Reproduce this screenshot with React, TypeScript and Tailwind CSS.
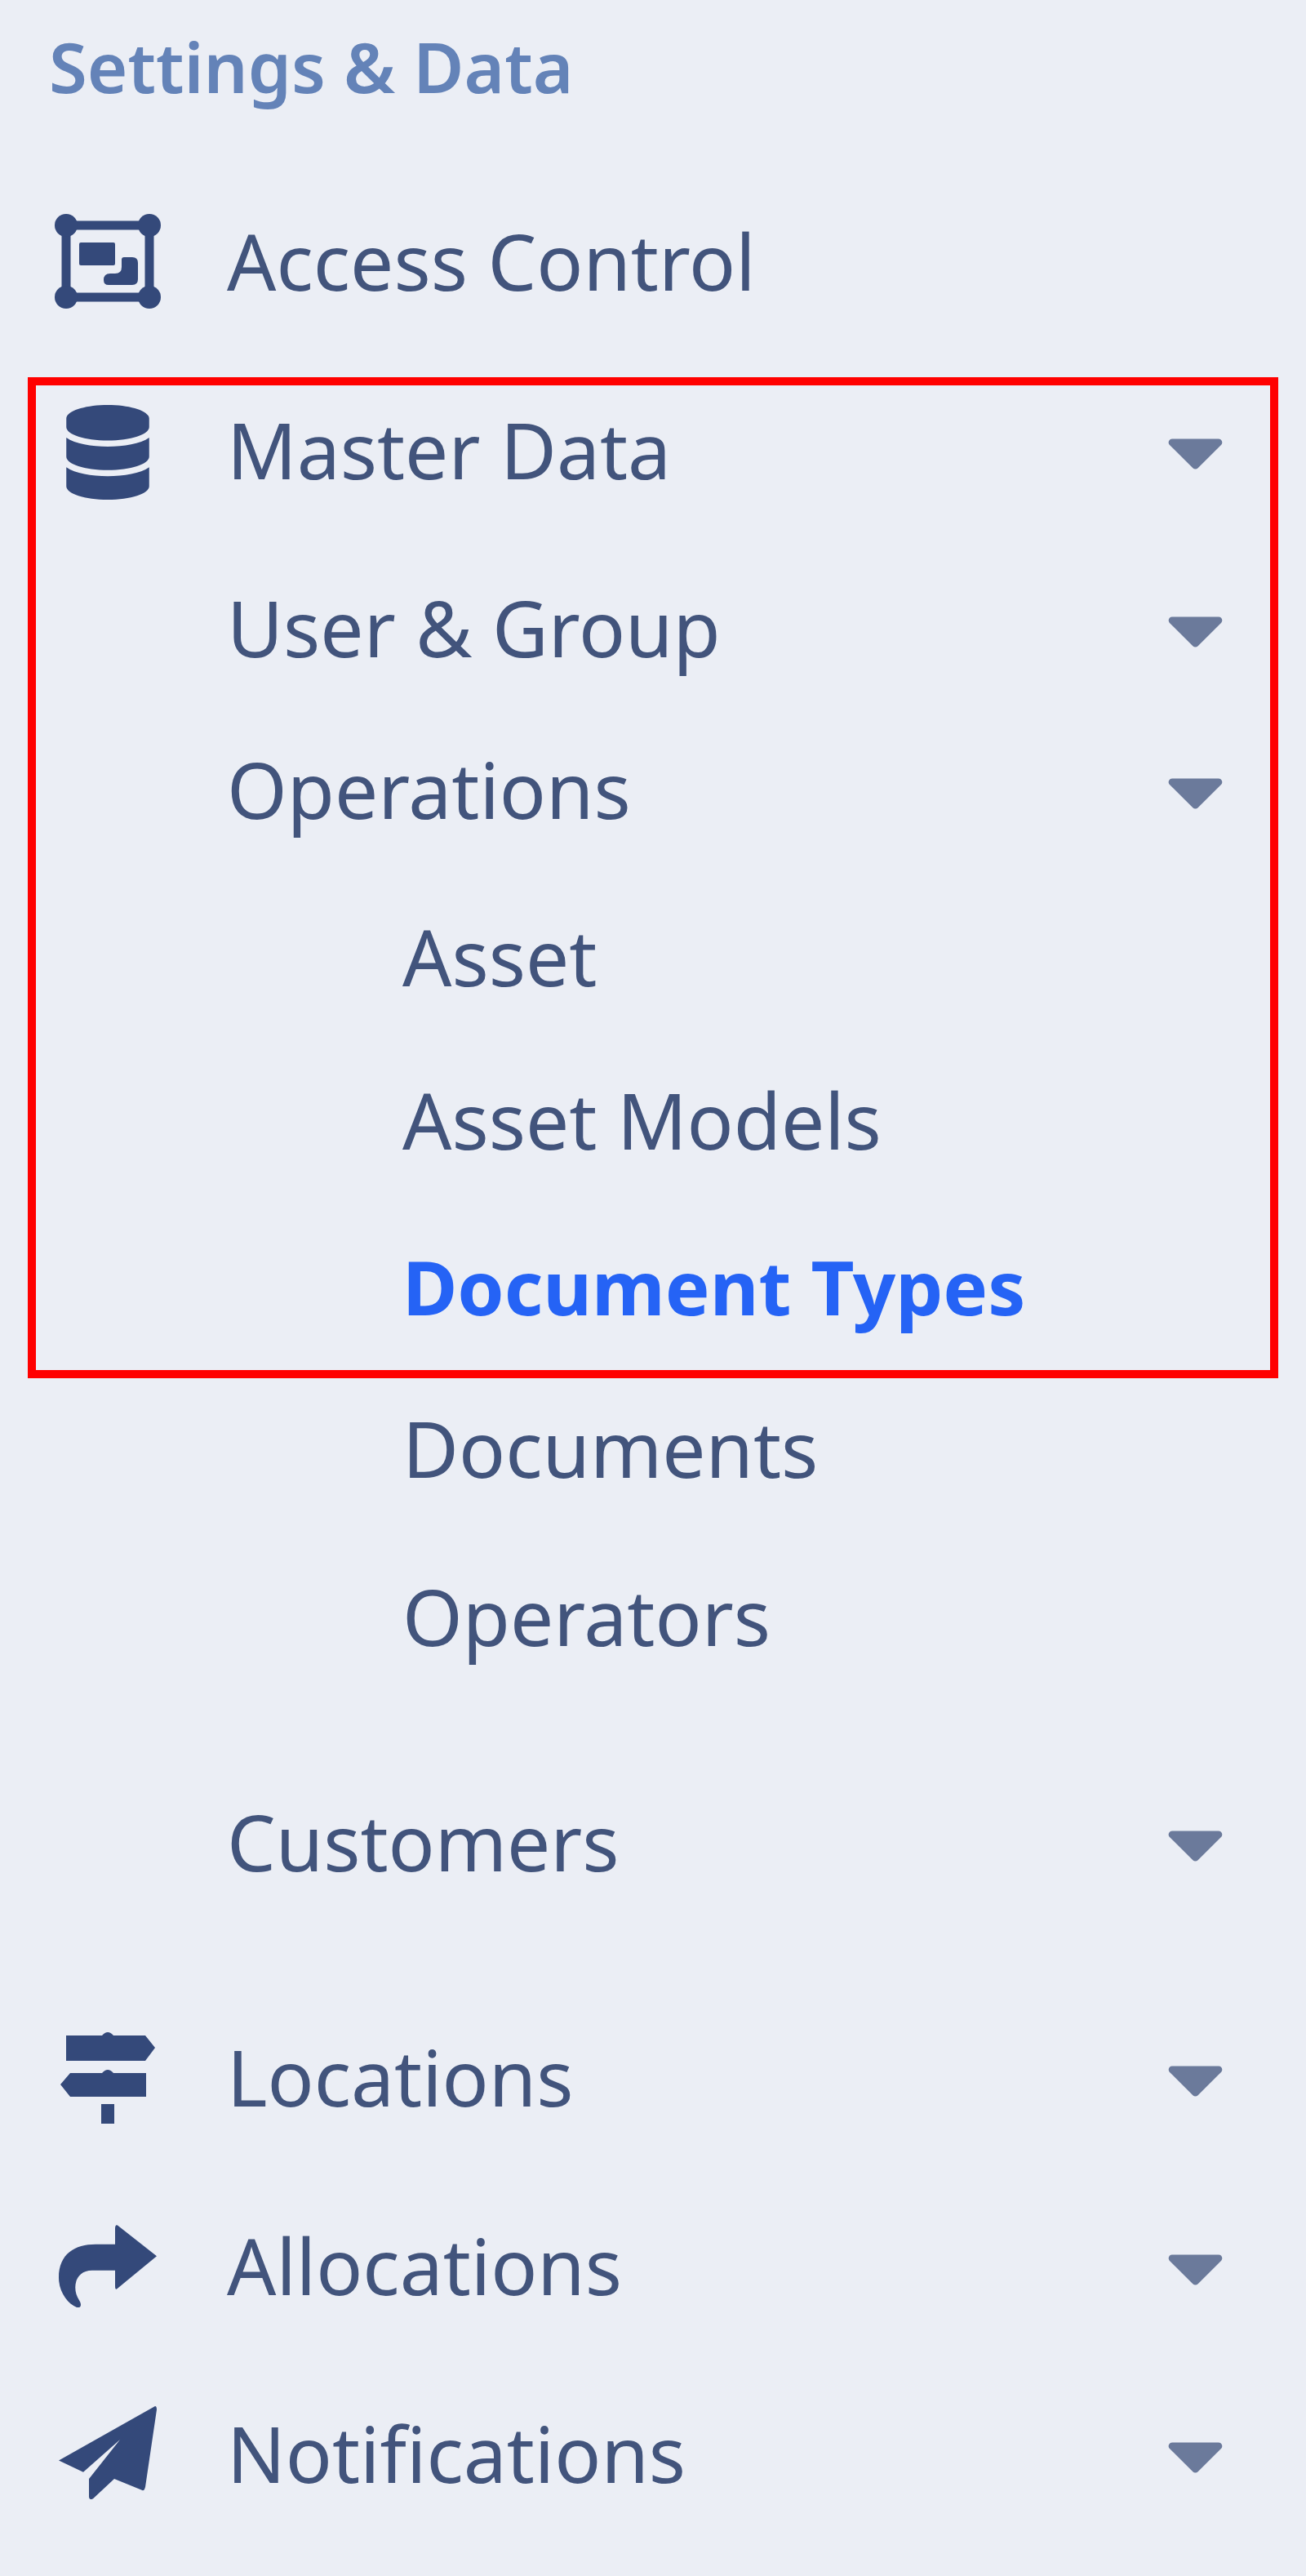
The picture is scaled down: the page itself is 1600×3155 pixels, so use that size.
import { FaDatabase, FaCaretDown } from "react-icons/fa";
import type { ReactNode } from "react";

const ink = "#34497a";

function AccessIcon() {
  return (
    <svg viewBox="0 0 130 116" className="w-[130px] h-[116px]" fill={ink}>
      <rect x="14" y="14" width="102" height="88" fill="none" stroke={ink} strokeWidth="11" />
      <circle cx="14" cy="14" r="14" />
      <circle cx="116" cy="14" r="14" />
      <circle cx="14" cy="102" r="14" />
      <circle cx="116" cy="102" r="14" />
      <rect x="30" y="35" width="44" height="28" rx="2" />
      <path d="M82 56q0-3 3-3h10q7 0 7 7v20q0 7-7 7H66q-6 0-6-6q0-8 8-8h6q8 0 8-8z" />
    </svg>
  );
}

function SignsIcon() {
  return (
    <svg viewBox="0 0 116 113" className="w-[116px] h-[113px]" fill={ink}>
      <path d="M7 5h44q7-8 14 0h39l12 15-12 16H7z" />
      <path d="M12 51h39q7-8 14 0h40v29H12L0 65z" />
      <rect x="50" y="89" width="16" height="24" />
    </svg>
  );
}

function ShareIcon() {
  return (
    <svg viewBox="0 0 120 70" preserveAspectRatio="none" className="w-[120px] h-[102px]" fill={ink}>
      <path d="M120 27 72 1q-3-1-3 3v13H45C20 17 0 25 0 45c0 12 11 22 22 25 6 1 6-3 3-6-9-9-6-25 16-25h28v13q0 4 3 2z" />
    </svg>
  );
}

function PlaneIcon() {
  return (
    <svg viewBox="0 0 120 82" preserveAspectRatio="none" className="w-[120px] h-[116px]" fill={ink}>
      <path d="M118 0 0 47l30 10 45-28-38 34v15q0 4 5 2l26-17 35 10q2 0 3-3L120 3q0-3-2-3z" />
    </svg>
  );
}

function Row({ icon, label, caret, indent = "main", className = "" }: { icon?: ReactNode; label: string; caret?: boolean; indent?: "main" | "sub"; className?: string }) {
  return (
    <div className={`flex items-center ${className}`}>
      <div className={indent === "sub" ? "w-[493px] shrink-0 flex justify-center" : "w-[278px] shrink-0 flex justify-center pr-[14px]"}>{icon}</div>
      <span className="text-[94.5px] leading-none text-[#42547c]">{label}</span>
      {caret && <FaCaretDown className="ml-auto mr-[100px] text-[#6b7a9b] w-[71px] h-[113px]" />}
    </div>
  );
}

export default function App() {
  return (
    <div className="relative w-[1600px] h-[3155px] bg-[#ebeef5] overflow-hidden font-['Noto_Sans',sans-serif]">
      <div className="flex h-[162px] items-center pl-[60px] text-[85px] leading-none font-semibold text-[#6483b8]">Settings &amp; Data</div>
      <Row className="h-[316px]" icon={<AccessIcon />} label="Access Control" />
      <Row className="h-[146px]" icon={<FaDatabase className="w-[106px] h-[116px] mt-[6px] text-[#34497a]" />} label="Master Data" caret />
      <Row className="h-[198px] mt-[46px]" label="User & Group" caret />
      <Row className="h-[198px]" label="Operations" caret />
      <Row className="h-[200px] mt-[6px]" indent="sub" label="Asset" />
      <Row className="h-[200px]" indent="sub" label="Asset Models" />
      <div className="flex h-[208px] items-center pl-[493px] text-[92px] leading-none font-bold text-[#2563f5]">Document Types</div>
      <Row className="h-[188px]" indent="sub" label="Documents" />
      <Row className="h-[200px] mt-[12px]" indent="sub" label="Operators" />
      <Row className="h-[200px] mt-[76px]" label="Customers" caret />
      <Row className="h-[232px] mt-[72px]" icon={<SignsIcon />} label="Locations" caret />
      <Row className="h-[230px]" icon={<ShareIcon />} label="Allocations" caret />
      <Row className="h-[230px]" icon={<PlaneIcon />} label="Notifications" caret />
      <div className="absolute left-[34px] top-[462px] w-[1532px] h-[1226px] border-[10px] border-[#ff0000]" />
    </div>
  );
}
